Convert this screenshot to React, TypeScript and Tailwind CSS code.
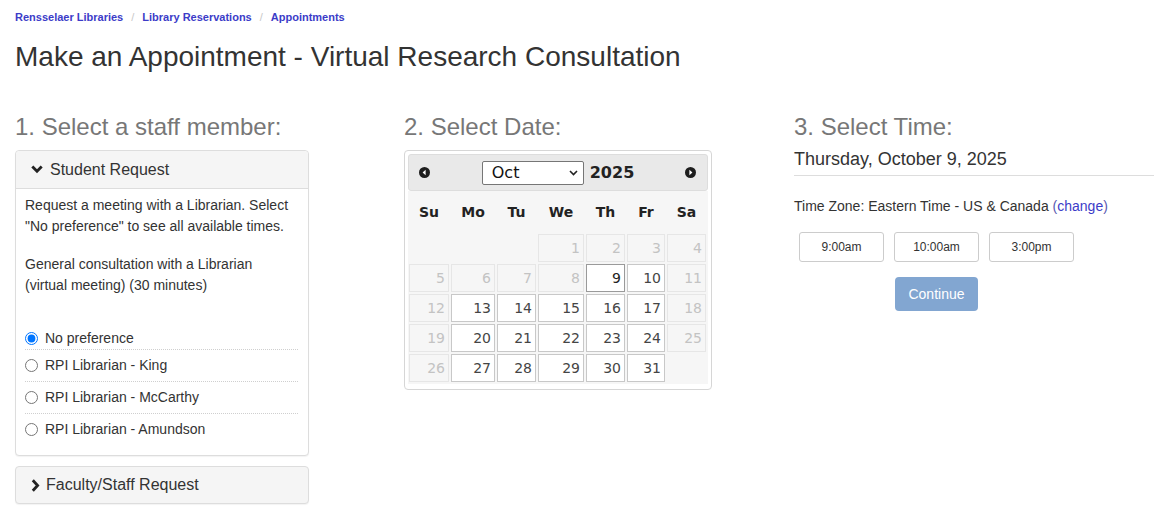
import React from "react";

const LINK = "text-[#3c3cc8]";

function ChevronDown() {
  return (
    <svg width="12" height="9" viewBox="0 0 12 9" className="shrink-0">
      <polyline points="1.3,1.5 6,6.3 10.7,1.5" fill="none" stroke="#222" strokeWidth="2.8" />
    </svg>
  );
}

function ChevronRight() {
  return (
    <svg width="9" height="13" viewBox="0 0 9 13" className="shrink-0">
      <polyline points="1.8,1.3 6.6,6.5 1.8,11.7" fill="none" stroke="#222" strokeWidth="2.8" />
    </svg>
  );
}

function CircleArrow({ dir }: { dir: "prev" | "next" }) {
  return (
    <svg width="11" height="11" viewBox="0 0 11 11">
      <circle cx="5.5" cy="5.5" r="5.5" fill="#1e1e1e" />
      {dir === "prev" ? (
        <polygon points="6.6,2.8 3.6,5.5 6.6,8.2" fill="#fff" />
      ) : (
        <polygon points="4.4,2.8 7.4,5.5 4.4,8.2" fill="#fff" />
      )}
    </svg>
  );
}

type Cell = { d?: number; s: "empty" | "off" | "on" | "sel" };

const weeks: Cell[][] = [
  [{ s: "empty" }, { s: "empty" }, { s: "empty" }, { d: 1, s: "off" }, { d: 2, s: "off" }, { d: 3, s: "off" }, { d: 4, s: "off" }],
  [{ d: 5, s: "off" }, { d: 6, s: "off" }, { d: 7, s: "off" }, { d: 8, s: "off" }, { d: 9, s: "sel" }, { d: 10, s: "on" }, { d: 11, s: "off" }],
  [{ d: 12, s: "off" }, { d: 13, s: "on" }, { d: 14, s: "on" }, { d: 15, s: "on" }, { d: 16, s: "on" }, { d: 17, s: "on" }, { d: 18, s: "off" }],
  [{ d: 19, s: "off" }, { d: 20, s: "on" }, { d: 21, s: "on" }, { d: 22, s: "on" }, { d: 23, s: "on" }, { d: 24, s: "on" }, { d: 25, s: "off" }],
  [{ d: 26, s: "off" }, { d: 27, s: "on" }, { d: 28, s: "on" }, { d: 29, s: "on" }, { d: 30, s: "on" }, { d: 31, s: "on" }, { s: "empty" }],
];

const colW = [42, 46, 41, 48, 41, 40, 41];
const dayNames = ["Su", "Mo", "Tu", "We", "Th", "Fr", "Sa"];

function DayCell({ c }: { c: Cell }) {
  if (c.s === "empty") return <td className="p-[1px]" />;
  const cls =
    c.s === "off"
      ? "bg-[#f6f6f6] border-[#e6e6e6] text-[#c3c3c3]"
      : c.s === "sel"
      ? "bg-white border-[#9a9a9a] text-[#222]"
      : "bg-white border-[#c8c8c8] text-[#454545]";
  return (
    <td className="p-[1px]">
      <div className={`h-[28px] border text-right pr-[3px] leading-[26px] text-[14px] ${cls}`}>{c.d}</div>
    </td>
  );
}

function Calendar() {
  return (
    <div className="w-[308px] border border-[#d6d6d6] rounded-[4px] bg-white p-[3px] pb-[5px] font-['DejaVu_Sans',Verdana,sans-serif]">
      <div className="h-[37px] border border-[#dddddd] bg-[#e9e9e9] rounded-[3px] flex items-center relative">
        <div className="absolute left-[10px] top-[12px]">
          <CircleArrow dir="prev" />
        </div>
        <div className="absolute right-[11px] top-[12px]">
          <CircleArrow dir="next" />
        </div>
        <div className="mx-auto flex items-center gap-[6px]">
          <div className="w-[102px] h-[24px] border border-[#767676] rounded-[2px] bg-white flex items-center justify-between pl-[9px] pr-[5px] text-[16px] text-[#111]">
            <span className="leading-[20px]">Oct</span>
            <svg width="9" height="6" viewBox="0 0 9 6">
              <polyline points="1,1 4.5,4.5 8,1" fill="none" stroke="#222" strokeWidth="1.6" />
            </svg>
          </div>
          <span className="text-[16px] font-bold text-[#222] leading-[20px]">2025</span>
        </div>
      </div>
      <div className="bg-[#f6f6f6] pb-[1px]">
        <table className="table-fixed border-separate border-spacing-0 w-[299px]">
          <colgroup>
            {colW.map((w, i) => (
              <col key={i} style={{ width: w }} />
            ))}
          </colgroup>
          <thead>
            <tr>
              {dayNames.map((n) => (
                <th key={n} className="h-[42px] text-center text-[14px] font-bold text-[#222] p-0 pt-[1px]">
                  {n}
                </th>
              ))}
            </tr>
          </thead>
          <tbody>
            {weeks.map((w, i) => (
              <tr key={i}>
                {w.map((c, j) => (
                  <DayCell key={j} c={c} />
                ))}
              </tr>
            ))}
          </tbody>
        </table>
      </div>
    </div>
  );
}

const staff = ["No preference", "RPI Librarian - King", "RPI Librarian - McCarthy", "RPI Librarian - Amundson"];

export default function App() {
  return (
    <div className="w-[1167px] h-[515px] overflow-hidden bg-white text-[#333] font-['Liberation_Sans',Arial,sans-serif]">
      <div className="px-[15px] pt-[10px]">
        <nav className="flex items-center text-[11px] font-bold leading-[14px]">
          <a className={LINK}>Rensselaer Libraries</a>
          <span className="mx-[8px] text-[#c8c8c8] font-normal">/</span>
          <a className={LINK}>Library Reservations</a>
          <span className="mx-[8px] text-[#c8c8c8] font-normal">/</span>
          <a className={LINK}>Appointments</a>
        </nav>
        <h1 className="mt-[18px] text-[28px] leading-[30px] text-[#333]">
          Make an Appointment - Virtual Research Consultation
        </h1>
      </div>

      <div className="flex mt-[41px]">
        {/* Column 1 */}
        <div className="w-[390px] px-[15px]">
          <h2 className="text-[24px] leading-[28px] text-[#777]">1. Select a staff member:</h2>
          <div className="mt-[9px] w-[294px] border border-[#dddddd] rounded-[4px] shadow-[0_1px_1px_rgba(0,0,0,0.05)] bg-white">
            <div className="h-[38px] bg-[#f5f5f5] border-b border-[#dddddd] rounded-t-[4px] flex items-center pl-[15px] gap-[7px] text-[16px] text-[#333]">
              <ChevronDown />
              <span>Student Request</span>
            </div>
            <div className="pl-[9px] pr-[10px] pt-[6px] pb-[10px] text-[14px] leading-[21px]">
              <p>Request a meeting with a Librarian. Select "No preference" to see all available times.</p>
              <p className="mt-[17px] pr-[8px]">General consultation with a Librarian (virtual meeting) (30 minutes)</p>
              <div className="mt-[32px]">
                {staff.map((s, i) => (
                  <label
                    key={s}
                    className={`flex items-center gap-[7px] leading-[20px] ${
                      i === 0 ? "pb-[1px]" : "pt-[5px] pb-[6px]"
                    } ${i < staff.length - 1 ? "border-b border-dotted border-[#cfcfcf]" : ""}`}
                  >
                    <input
                      type="radio"
                      name="staff"
                      defaultChecked={i === 0}
                      className="m-0 w-[13px] h-[13px] shrink-0"
                    />
                    <span>{s}</span>
                  </label>
                ))}
              </div>
            </div>
          </div>
          <div className="mt-[10px] w-[294px] h-[38px] border border-[#dddddd] rounded-[4px] bg-[#f5f5f5] shadow-[0_1px_1px_rgba(0,0,0,0.05)] flex items-center pl-[15px] gap-[6px] text-[16px] text-[#333]">
            <ChevronRight />
            <span>Faculty/Staff Request</span>
          </div>
        </div>

        {/* Column 2 */}
        <div className="w-[390px] px-[15px]">
          <h2 className="text-[24px] leading-[28px] text-[#777]">2. Select Date:</h2>
          <div className="mt-[9px]">
            <Calendar />
          </div>
        </div>

        {/* Column 3 */}
        <div className="w-[390px] pl-[16px] pr-[13px]">
          <h2 className="text-[24px] leading-[28px] text-[#777]">3. Select Time:</h2>
          <div>
            <div className="mt-[8px] text-[18px] leading-[20px] text-[#333]">Thursday, October 9, 2025</div>
            <div className="mt-[6px] border-t border-[#dddddd]" />
            <div className="mt-[20px] text-[14px] leading-[20px]">
              Time Zone: Eastern Time - US &amp; Canada <span className="text-[#5a5ab0]">(</span>
              <a className={LINK}>change</a>
              <span className="text-[#5a5ab0]">)</span>
            </div>
            <div className="mt-[16px] w-fit flex flex-col items-center">
              <div className="flex">
                {["9:00am", "10:00am", "3:00pm"].map((t) => (
                  <button
                    key={t}
                    className="mx-[5px] w-[85px] h-[30px] border border-[#cccccc] rounded-[3px] bg-white text-[12px] text-[#333]"
                  >
                    {t}
                  </button>
                ))}
              </div>
              <button className="mt-[15px] w-[83px] h-[34px] rounded-[4px] bg-[#82a6d1] text-white text-[14px]">
                Continue
              </button>
            </div>
          </div>
        </div>
      </div>
    </div>
  );
}
